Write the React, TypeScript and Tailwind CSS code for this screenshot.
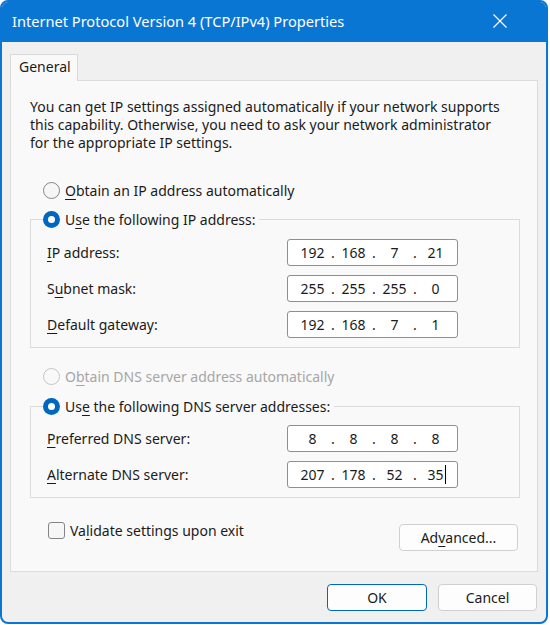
import React from "react";

const FONT = "font-['Noto_Sans',sans-serif]";

function U({ children }: { children: React.ReactNode }) {
  return <span className="underline underline-offset-[3px] decoration-1">{children}</span>;
}

function Radio({ checked, disabled }: { checked?: boolean; disabled?: boolean }) {
  if (checked) {
    return (
      <span className="w-[17px] h-[17px] rounded-full bg-[#0067c0] flex items-center justify-center shrink-0">
        <span className="w-[7px] h-[7px] rounded-full bg-white" />
      </span>
    );
  }
  return (
    <span
      className={`w-[17px] h-[17px] rounded-full shrink-0 border ${disabled ? "border-[#c5c5c5] bg-[#f9f9f9]" : "border-[#858585] bg-[#f6f6f6]"}`}
    />
  );
}

function IpBox({ parts, caret }: { parts: string[]; caret?: boolean }) {
  return (
    <div className="w-[171px] h-[27px] rounded-[3px] border border-[#8f8f8f] bg-white flex items-center pl-[8px] text-[14px] text-[#1b1b1b]">
      {parts.map((p, i) => (
        <React.Fragment key={i}>
          <span className="w-[33px] text-center relative">
            {p}
            {caret && i === 3 && <span className="absolute top-[1px] ml-[1px] w-px h-[19px] bg-black" />}
          </span>
          {i < 3 && <span className="w-[8px] text-center">.</span>}
        </React.Fragment>
      ))}
    </div>
  );
}

function Row({ label, parts, caret }: { label: React.ReactNode; parts: string[]; caret?: boolean }) {
  return (
    <div className="flex items-center h-[27px]">
      <div className="w-[240px]">{label}</div>
      <IpBox parts={parts} caret={caret} />
    </div>
  );
}

export default function App() {
  return (
    <div className={`w-[550px] h-[625px] bg-white ${FONT}`}>
      <div className="w-[548px] h-[624px] rounded-[8px] border-2 border-[#0a76d4] overflow-hidden flex flex-col bg-[#f0f0f0]">
        {/* title bar */}
        <div className="h-[40px] bg-[#0a76d4] flex items-center justify-between pl-[10px] pr-[38px] shrink-0">
          <span className="text-white text-[14.6px]">Internet Protocol Version 4 (TCP/IPv4) Properties</span>
          <svg width="16" height="16" viewBox="0 0 16 16" className="mt-[-2px]">
            <path d="M1.5 1.5 L14.5 14.5 M14.5 1.5 L1.5 14.5" stroke="white" strokeWidth="1.2" />
          </svg>
        </div>

        <div className="flex-1 px-[8px] pt-[12px] text-[14px] text-[#1b1b1b]">
          {/* tab */}
          <div className="w-[68px] h-[27px] border border-b-0 border-[#d9d9d9] bg-[#f9f9f9] pl-[8px] pt-[1px] relative z-10 mb-[-1px]">
            General
          </div>

          {/* panel */}
          <div className="h-[492px] border border-[#dcdcdc] bg-[#f9f9f9] px-[19px] pt-[17px]">
            <p className="leading-[18px]">
              You can get IP settings assigned automatically if your network supports
              <br />
              this capability. Otherwise, you need to ask your network administrator
              <br />
              for the appropriate IP settings.
            </p>

            <div className="flex items-center gap-[5px] h-[18px] mt-[29px] pl-[13px]">
              <Radio />
              <span>
                <U>O</U>btain an IP address automatically
              </span>
            </div>

            <fieldset className="mt-[11px] mr-[-2px] border border-[#dcdcdc] pl-[16px] pb-[9px]">
              <legend className="ml-[-4px] pr-[4px] flex items-center gap-[5px] h-[18px]">
                <Radio checked />
                <span>
                  U<U>s</U>e the following IP address:
                </span>
              </legend>
              <div className="flex flex-col gap-[9px] pt-[11px]">
                <Row label={<><U>I</U>P address:</>} parts={["192", "168", "7", "21"]} />
                <Row label={<>S<U>u</U>bnet mask:</>} parts={["255", "255", "255", "0"]} />
                <Row label={<><U>D</U>efault gateway:</>} parts={["192", "168", "7", "1"]} />
              </div>
            </fieldset>

            <div className="flex items-center gap-[5px] h-[18px] mt-[19px] pl-[13px] text-[#a6a6a6]">
              <Radio disabled />
              <span>
                O<U>b</U>tain DNS server address automatically
              </span>
            </div>

            <fieldset className="mt-[12px] mr-[-2px] border border-[#dcdcdc] pl-[16px] pb-[9px]">
              <legend className="ml-[-4px] pr-[4px] flex items-center gap-[5px] h-[18px]">
                <Radio checked />
                <span>
                  Us<U>e</U> the following DNS server addresses:
                </span>
              </legend>
              <div className="flex flex-col gap-[9px] pt-[10px]">
                <Row label={<><U>P</U>referred DNS server:</>} parts={["8", "8", "8", "8"]} />
                <Row label={<><U>A</U>lternate DNS server:</>} parts={["207", "178", "52", "35"]} caret />
              </div>
            </fieldset>

            <div className="flex justify-between items-start">
              <div className="flex items-center gap-[5px] mt-[24px] ml-[18px] h-[17px]">
                <span className="w-[17px] h-[17px] rounded-[3px] border border-[#858585] bg-[#f6f6f6] shrink-0" />
                <span>
                  Va<U>l</U>idate settings upon exit
                </span>
              </div>
              <button className="mt-[26px] w-[119px] h-[27px] rounded-[4px] border border-[#d0d0d0] bg-[#fdfdfd] text-[14px] text-[#1b1b1b]">
                Ad<U>v</U>anced...
              </button>
            </div>
          </div>

          {/* footer */}
          <div className="flex justify-end gap-[11px] mt-[12px] pr-[1px]">
            <button className="w-[100px] h-[27px] rounded-[4px] border border-[#0067c0] bg-[#fdfdfd] text-[14px] text-[#1b1b1b]">
              OK
            </button>
            <button className="w-[99px] h-[27px] rounded-[4px] border border-[#d0d0d0] bg-[#fdfdfd] text-[14px] text-[#1b1b1b]">
              Cancel
            </button>
          </div>
        </div>
      </div>
    </div>
  );
}
